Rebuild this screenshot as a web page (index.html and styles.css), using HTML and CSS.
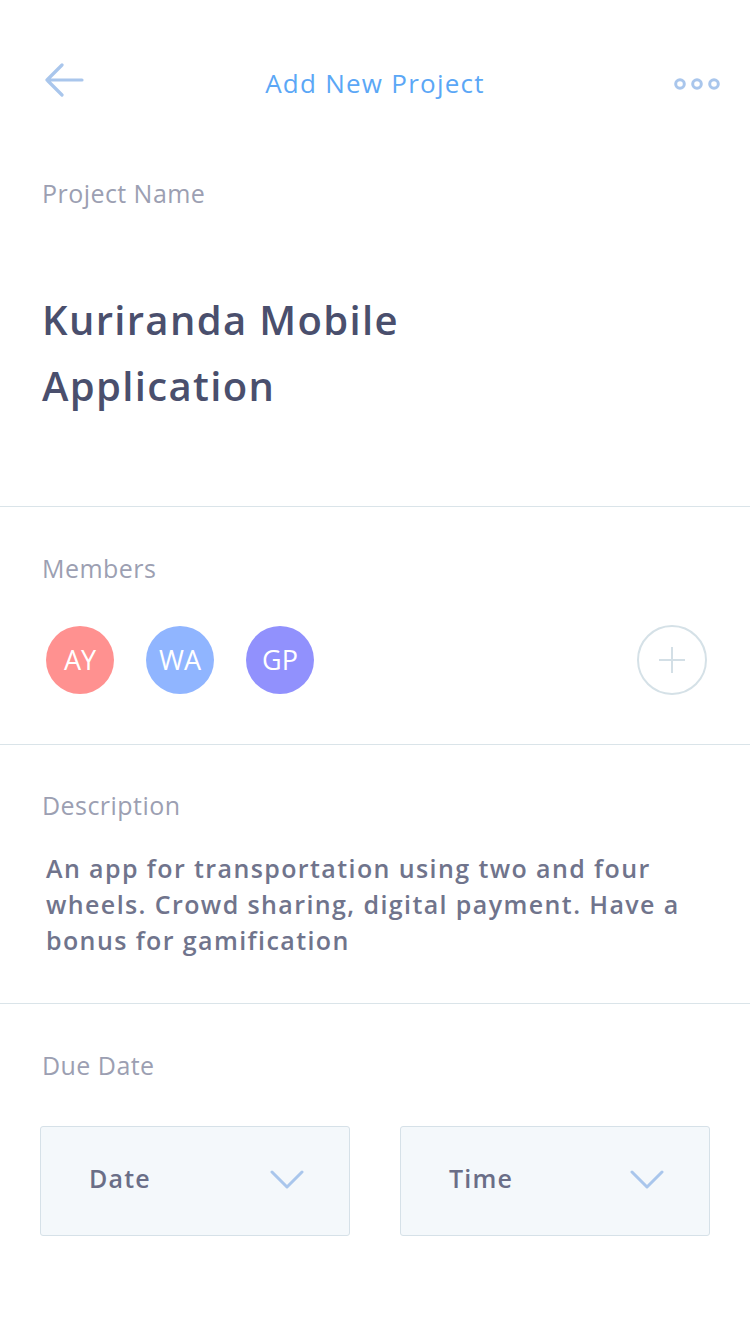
FILE: index.html
```html
<!DOCTYPE html>
<html>
<head>
<meta charset="utf-8">
<link rel="stylesheet" href="styles.css">
</head>
<body>
<div class="screen">
  <header class="header">
    <svg class="back" width="40" height="34" viewBox="0 0 40 34">
      <path d="M18 2 L3 17 L18 32 M3 17 L38 17" fill="none" stroke="#a9c6ec" stroke-width="3.2" stroke-linecap="round" stroke-linejoin="round"/>
    </svg>
    <div class="title">Add New Project</div>
    <svg class="more" width="46" height="16" viewBox="0 0 46 16">
      <circle cx="6" cy="8" r="4.3" fill="none" stroke="#a9c6ec" stroke-width="3"/>
      <circle cx="23" cy="8" r="4.3" fill="none" stroke="#a9c6ec" stroke-width="3"/>
      <circle cx="40" cy="8" r="4.3" fill="none" stroke="#a9c6ec" stroke-width="3"/>
    </svg>
  </header>

  <section class="section s-name">
    <div class="label">Project Name</div>
    <div class="name">Kuriranda Mobile Application</div>
  </section>

  <section class="section s-members">
    <div class="label">Members</div>
    <div class="members">
      <div class="avatars">
        <div class="avatar a1">AY</div>
        <div class="avatar a2">WA</div>
        <div class="avatar a3">GP</div>
      </div>
      <div class="add">
        <svg width="30" height="30" viewBox="0 0 30 30">
          <path d="M15 2 V28 M2 15 H28" stroke="#d3dfe6" stroke-width="2" fill="none"/>
        </svg>
      </div>
    </div>
  </section>

  <section class="section s-desc">
    <div class="label">Description</div>
    <p class="desc">An app for transportation using two and four wheels. Crowd sharing, digital payment. Have a bonus for gamification</p>
  </section>

  <section class="section s-due">
    <div class="label">Due Date</div>
    <div class="pickers">
      <div class="picker">
        <span>Date</span>
        <svg width="34" height="20" viewBox="0 0 34 20"><path d="M2 2 L17 17 L32 2" fill="none" stroke="#a9c6ec" stroke-width="3" stroke-linecap="round" stroke-linejoin="round"/></svg>
      </div>
      <div class="picker">
        <span>Time</span>
        <svg width="34" height="20" viewBox="0 0 34 20"><path d="M2 2 L17 17 L32 2" fill="none" stroke="#a9c6ec" stroke-width="3" stroke-linecap="round" stroke-linejoin="round"/></svg>
      </div>
    </div>
  </section>
</div>
</body>
</html>
```

FILE: styles.css
```css
* { box-sizing: border-box; }
html, body {
  margin: 0;
  padding: 0;
  background: #ffffff;
}
body {
  font-family: "Open Sans", "Noto Sans", sans-serif;
  width: 750px;
  height: 1334px;
  overflow: hidden;
}
.screen {
  width: 750px;
}
.header {
  height: 120px;
  padding: 48px 30px 0 44px;
  display: flex;
  align-items: center;
  justify-content: space-between;
  position: relative;
}
.header .back {
  display: block;
  margin-top: -8px;
}
.header .title {
  position: absolute;
  left: 0;
  right: 0;
  top: 63px;
  text-align: center;
  font-size: 26px;
  line-height: 40px;
  letter-spacing: 1.25px;
  color: #5ba7f6;
  pointer-events: none;
}
.header .more {
  display: block;
}
.section {
  border-bottom: 1px solid #dae4e9;
  padding-left: 42px;
  padding-right: 43px;
}
.label {
  font-size: 25px;
  line-height: 33px;
  color: #9c9fb2;
  letter-spacing: 0.45px;
}
.s-name {
  padding-top: 57px;
  padding-bottom: 87px;
}
.name {
  margin-top: 77px;
  font-size: 40px;
  line-height: 66px;
  font-weight: 600;
  color: #4a4f6d;
  letter-spacing: 1.35px;
  width: 400px;
}
.s-members {
  padding-top: 45px;
  padding-bottom: 49px;
}
.members {
  margin-top: 40px;
  height: 70px;
  display: flex;
  align-items: center;
  justify-content: space-between;
  padding-left: 4px;
}
.avatars {
  display: flex;
  gap: 32px;
}
.avatar {
  width: 68px;
  height: 68px;
  border-radius: 50%;
  color: #ffffff;
  font-size: 27px;
  font-weight: 500;
  display: flex;
  align-items: center;
  justify-content: center;
  letter-spacing: 0;
  padding-bottom: 2px;
}
.a1 { background: #ff9190; }
.a2 { background: #90b5ff; }
.a3 { background: #9191fd; }
.add {
  width: 70px;
  height: 70px;
  border-radius: 50%;
  border: 2px solid #d5e1e7;
  display: flex;
  align-items: center;
  justify-content: center;
}
.add svg { display: block; }
.s-desc {
  padding-top: 44px;
  padding-bottom: 45px;
}
.desc {
  margin: 28px 0 0 0;
  padding-left: 4px;
  font-size: 25px;
  line-height: 36px;
  font-weight: 600;
  color: #70748c;
  letter-spacing: 1.4px;
}
.s-due {
  border-bottom: none;
  padding-top: 45px;
  padding-left: 42px;
  padding-right: 0;
}
.pickers {
  margin-top: 44px;
  margin-left: -2px;
  display: flex;
  gap: 50px;
}
.picker {
  width: 310px;
  height: 110px;
  flex: none;
  background: #f4f8fb;
  border: 1px solid #d6e1e8;
  border-radius: 3px;
  display: flex;
  align-items: center;
  justify-content: space-between;
  padding: 0 45px 6px 48px;
}
.picker span {
  font-size: 25px;
  font-weight: 600;
  color: #6a6e87;
  letter-spacing: 1.2px;
}
.picker svg { display: block; margin-top: 4px; }
```
